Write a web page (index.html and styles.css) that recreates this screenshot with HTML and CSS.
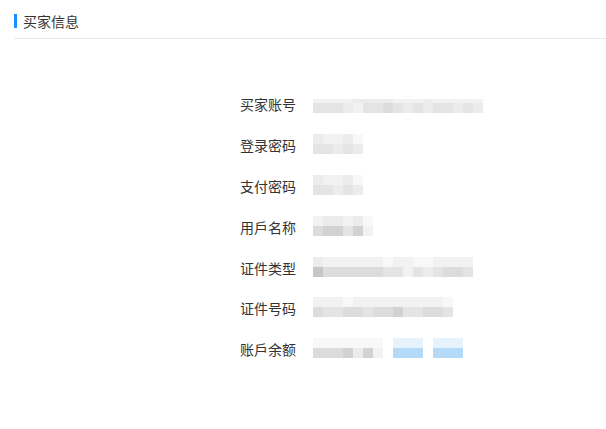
FILE: index.html
```html
<!DOCTYPE html>
<html lang="zh-CN">

<head>
    <meta charset="UTF-8">
    <meta name="viewport" content="width=device-width, initial-scale=1.0">
    <title>买家信息</title>
    <link rel="stylesheet" href="styles.css">
</head>

<body>
    <div class="panel">
        <div class="panel-title"><span class="title-bar"></span>买家信息</div>

        <div class="info-form">
            <div class="info-row">
                <span class="info-label">买家账号</span>
                <div class="mosaic mosaic-thin">
                    <div class="m-row"><i class="s2"></i><i class="s2"></i><i class="s2"></i><i class="s2"></i><i class="s3"></i><i class="s3"></i><i class="s3"></i><i class="s3"></i><i class="s2"></i><i class="s2"></i><i class="s2"></i><i class="s3"></i><i class="s2"></i><i class="s2"></i><i class="s2"></i><i class="s2"></i><i class="s2"></i></div>
                    <div class="m-row"><i class="s4"></i><i class="s4"></i><i class="s4"></i><i class="s3"></i><i class="s2"></i><i class="s4"></i><i class="s4"></i><i class="s5"></i><i class="s4"></i><i class="s3"></i><i class="s4"></i><i class="s3"></i><i class="s4"></i><i class="s4"></i><i class="s3"></i><i class="s4"></i><i class="s3"></i></div>
                </div>
            </div>
            <div class="info-row">
                <span class="info-label">登录密码</span>
                <div class="mosaic">
                    <div class="m-row"><i class="s3"></i><i class="s2"></i><i class="s2"></i><i class="s3"></i><i class="s1"></i></div>
                    <div class="m-row"><i class="s4"></i><i class="s4"></i><i class="s3"></i><i class="s4"></i><i class="s3"></i></div>
                </div>
            </div>
            <div class="info-row">
                <span class="info-label">支付密码</span>
                <div class="mosaic">
                    <div class="m-row"><i class="s3"></i><i class="s2"></i><i class="s2"></i><i class="s3"></i><i class="s1"></i></div>
                    <div class="m-row"><i class="s4"></i><i class="s4"></i><i class="s3"></i><i class="s4"></i><i class="s3"></i></div>
                </div>
            </div>
            <div class="info-row">
                <span class="info-label">用戶名称</span>
                <div class="mosaic">
                    <div class="m-row"><i class="s2"></i><i class="s3"></i><i class="s3"></i><i class="s2"></i><i class="s3"></i><i class="s1"></i></div>
                    <div class="m-row"><i class="s5"></i><i class="s6"></i><i class="s6"></i><i class="s4"></i><i class="s6"></i><i class="s2"></i></div>
                </div>
            </div>
            <div class="info-row">
                <span class="info-label">证件类型</span>
                <div class="mosaic">
                    <div class="m-row"><i class="s3"></i><i class="s2"></i><i class="s2"></i><i class="s2"></i><i class="s2"></i><i class="s2"></i><i class="s2"></i><i class="s1"></i><i class="s2"></i><i class="s2"></i><i class="s1"></i><i class="s1"></i><i class="s2"></i><i class="s2"></i><i class="s2"></i><i class="s2"></i></div>
                    <div class="m-row"><i class="s7"></i><i class="s5"></i><i class="s5"></i><i class="s5"></i><i class="s5"></i><i class="s5"></i><i class="s5"></i><i class="s4"></i><i class="s4"></i><i class="s2"></i><i class="s4"></i><i class="s3"></i><i class="s4"></i><i class="s5"></i><i class="s5"></i><i class="s4"></i></div>
                </div>
            </div>
            <div class="info-row">
                <span class="info-label">证件号码</span>
                <div class="mosaic">
                    <div class="m-row"><i class="s2"></i><i class="s2"></i><i class="s2"></i><i class="s1"></i><i class="s2"></i><i class="s2"></i><i class="s2"></i><i class="s2"></i><i class="s2"></i><i class="s2"></i><i class="s2"></i><i class="s2"></i><i class="s2"></i><i class="s1"></i></div>
                    <div class="m-row"><i class="s5"></i><i class="s4"></i><i class="s4"></i><i class="s5"></i><i class="s5"></i><i class="s4"></i><i class="s5"></i><i class="s5"></i><i class="s6"></i><i class="s4"></i><i class="s4"></i><i class="s5"></i><i class="s5"></i><i class="s4"></i></div>
                </div>
            </div>
            <div class="info-row">
                <span class="info-label">账戶余额</span>
                <div class="mosaic">
                    <div class="m-row"><i class="s1"></i><i class="s1"></i><i class="s1"></i><i class="s1"></i><i class="s1"></i><i class="s1"></i><i class="s1"></i><i></i><i class="b1"></i><i class="b1"></i><i class="b1"></i><i></i><i class="b1"></i><i class="b1"></i><i class="b1"></i></div>
                    <div class="m-row"><i class="s5"></i><i class="s5"></i><i class="s5"></i><i class="s6"></i><i class="s3"></i><i class="s6"></i><i class="s2"></i><i></i><i class="b2"></i><i class="b2"></i><i class="b2"></i><i></i><i class="b2"></i><i class="b2"></i><i class="b2"></i></div>
                </div>
            </div>
        </div>
    </div>
</body>

</html>
```

FILE: styles.css
```css
body {
    margin: 0;
    background-color: #fff;
    font-family: "Noto Sans CJK SC", "Noto Sans", sans-serif;
    color: #333;
}

.panel {
    padding-left: 14px;
}

.panel-title {
    display: flex;
    align-items: center;
    height: 14px;
    padding: 14px 0 10px;
    font-size: 14px;
    line-height: 14px;
    border-bottom: 1px solid #e8e8e8;
}

.title-bar {
    width: 3px;
    height: 14px;
    margin-right: 6px;
    background-color: #1890ff;
}

.info-form {
    padding: 45px 0 0 226px;
}

.info-row {
    display: flex;
    align-items: center;
    height: 40.8px;
}

.info-label {
    width: 56px;
    margin-right: 17px;
    font-size: 14px;
    text-align: right;
}

.mosaic {
    display: flex;
    flex-direction: column;
    margin-top: -2px;
}

.mosaic-thin {
    margin-top: 4px;
}

.m-row {
    display: flex;
}

.m-row i {
    display: block;
    width: 10px;
    height: 10px;
}

.mosaic-thin .m-row:first-child i {
    height: 4px;
}

.s1 { background-color: #f8f8f8; }
.s2 { background-color: #f2f2f2; }
.s3 { background-color: #ececec; }
.s4 { background-color: #e4e4e4; }
.s5 { background-color: #dcdcdc; }
.s6 { background-color: #d2d2d2; }
.s7 { background-color: #c6c6c6; }
.b1 { background-color: #e6f2fc; }
.b2 { background-color: #b5daf7; }
```
